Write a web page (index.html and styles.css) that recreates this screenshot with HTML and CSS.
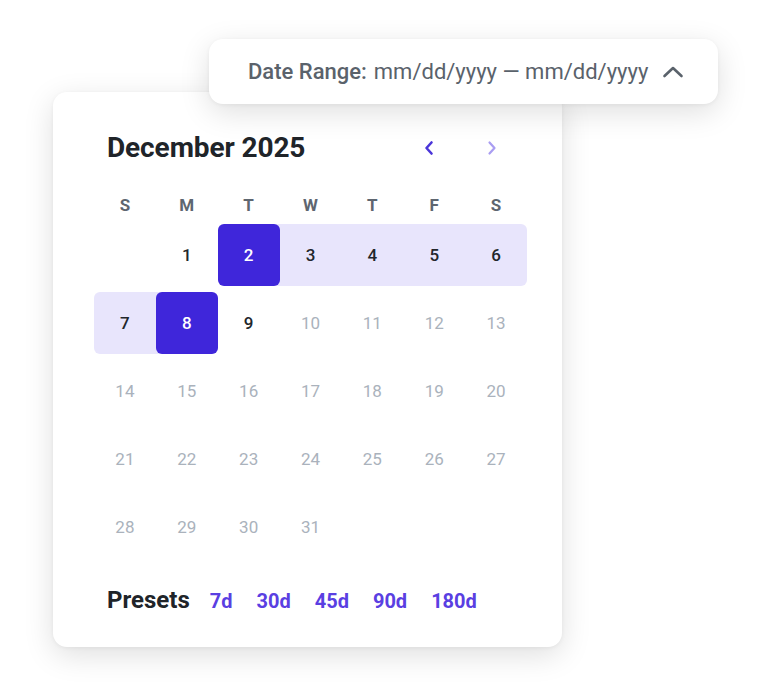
FILE: index.html
```html
<!DOCTYPE html>
<html lang="en">
<head>
<meta charset="utf-8">
<title>Date Range Picker</title>
<link rel="stylesheet" href="styles.css">
</head>
<body>
<div class="stage">
  <div class="calendar">
    <div class="cal-head">
      <h2 class="month">December 2025</h2>
      <div class="nav">
        <button class="nav-btn prev" aria-label="Previous month">
          <svg width="12" height="18" viewBox="0 0 12 18"><path d="M8.5 3.5 L3.5 9 L8.5 14.5" fill="none" stroke="currentColor" stroke-width="2.6" stroke-linecap="round" stroke-linejoin="round"/></svg>
        </button>
        <button class="nav-btn next" aria-label="Next month">
          <svg width="12" height="18" viewBox="0 0 12 18"><path d="M3.5 3.5 L8.5 9 L3.5 14.5" fill="none" stroke="currentColor" stroke-width="2.2" stroke-linecap="round" stroke-linejoin="round"/></svg>
        </button>
      </div>
    </div>
    <div class="grid weekdays">
      <span>S</span><span>M</span><span>T</span><span>W</span><span>T</span><span>F</span><span>S</span>
    </div>
    <div class="grid days">
      <span class="day empty"></span>
      <span class="day">1</span>
      <span class="day range start"><b>2</b></span>
      <span class="day range">3</span>
      <span class="day range">4</span>
      <span class="day range">5</span>
      <span class="day range wk-end">6</span>
      <span class="day range wk-start">7</span>
      <span class="day range end"><b>8</b></span>
      <span class="day">9</span>
      <span class="day off">10</span>
      <span class="day off">11</span>
      <span class="day off">12</span>
      <span class="day off">13</span>
      <span class="day off">14</span>
      <span class="day off">15</span>
      <span class="day off">16</span>
      <span class="day off">17</span>
      <span class="day off">18</span>
      <span class="day off">19</span>
      <span class="day off">20</span>
      <span class="day off">21</span>
      <span class="day off">22</span>
      <span class="day off">23</span>
      <span class="day off">24</span>
      <span class="day off">25</span>
      <span class="day off">26</span>
      <span class="day off">27</span>
      <span class="day off">28</span>
      <span class="day off">29</span>
      <span class="day off">30</span>
      <span class="day off">31</span>
    </div>
    <div class="presets">
      <span class="presets-label">Presets</span>
      <a class="preset">7d</a>
      <a class="preset">30d</a>
      <a class="preset">45d</a>
      <a class="preset">90d</a>
      <a class="preset">180d</a>
    </div>
  </div>
  <button class="range-btn">
    <span class="range-label">Date Range:</span>
    <span class="range-value">mm/dd/yyyy — mm/dd/yyyy</span>
    <svg class="chev" width="22" height="14" viewBox="0 0 22 14"><path d="M2.5 11 L11 3 L19.5 11" fill="none" stroke="currentColor" stroke-width="2.6" stroke-linecap="round" stroke-linejoin="round"/></svg>
  </button>
</div>
</body>
</html>
```

FILE: styles.css
```css
* { box-sizing: border-box; }

html, body {
  margin: 0;
  background: #ffffff;
  font-family: Roboto, "Liberation Sans", Arial, sans-serif;
  color: #202429;
}

.stage {
  position: relative;
  padding: 92px 0 0 53px;
  height: 700px;
}

.calendar {
  width: 509px;
  height: 555px;
  background: #fff;
  border-radius: 14px;
  box-shadow: 0 8px 30px rgba(0, 0, 0, 0.13), 0 1px 4px rgba(0, 0, 0, 0.05);
  padding: 41px 35px 0 41px;
}

.cal-head {
  display: flex;
  align-items: center;
  justify-content: space-between;
  height: 30px;
  padding-left: 13px;
}

.month {
  margin: 0;
  font-size: 28px;
  line-height: 30px;
  font-weight: 700;
  color: #202429;
  letter-spacing: -0.1px;
}

.nav {
  display: flex;
  gap: 51px;
  margin-right: 29px;
}

.nav-btn {
  border: 0;
  background: none;
  padding: 0;
  width: 12px;
  height: 18px;
  display: flex;
  cursor: pointer;
}
.nav-btn.prev { color: #4b36d9; }
.nav-btn.next { color: #a99df2; }

.grid {
  display: grid;
  grid-template-columns: repeat(7, 1fr);
  width: 433px;
}

.weekdays {
  margin-top: 32px;
  height: 20px;
  font-size: 17px;
  line-height: 20px;
  font-weight: 700;
  color: #5e6670;
  text-align: center;
}

.days {
  margin-top: 9px;
  grid-auto-rows: 62px;
  row-gap: 6px;
  font-size: 17px;
}

.day {
  display: flex;
  align-items: center;
  justify-content: center;
  color: #22262b;
  font-weight: 500;
}

.day.off {
  color: #aab2bc;
  font-weight: 400;
}

.day.range { background: #e8e5fc; }
.day.wk-end { border-radius: 0 6px 6px 0; }
.day.wk-start { border-radius: 6px 0 0 6px; }

.day.start { background: linear-gradient(90deg, transparent 50%, #e8e5fc 50%); }
.day.end { background: linear-gradient(90deg, #e8e5fc 50%, transparent 50%); }

.day b {
  width: 100%;
  height: 100%;
  display: flex;
  align-items: center;
  justify-content: center;
  background: #3f26da;
  border-radius: 6px;
  color: #ffffff;
  font-weight: 500;
}

.presets {
  display: flex;
  align-items: baseline;
  margin-top: 28px;
  padding-left: 13px;
  height: 28px;
  line-height: 28px;
}

.presets-label {
  font-size: 24px;
  font-weight: 700;
  color: #202429;
  margin-right: 20px;
}

.preset {
  font-size: 20px;
  font-weight: 700;
  color: #5a3fe2;
  margin-right: 24px;
  cursor: pointer;
}

.range-btn {
  position: absolute;
  left: 209px;
  top: 39px;
  width: 509px;
  height: 65px;
  border: 0;
  border-radius: 14px;
  background: #fff;
  box-shadow: 0 8px 30px rgba(0, 0, 0, 0.13), 0 1px 4px rgba(0, 0, 0, 0.05);
  display: flex;
  align-items: center;
  padding: 0 0 0 39px;
  font-family: Roboto, "Liberation Sans", Arial, sans-serif;
  font-size: 22px;
  color: #5a626b;
  cursor: pointer;
}

.range-label {
  font-weight: 500;
  margin-right: 7px;
}

.range-value { font-weight: 400; }

.chev {
  margin-left: 14px;
  color: #5a626b;
}
```
